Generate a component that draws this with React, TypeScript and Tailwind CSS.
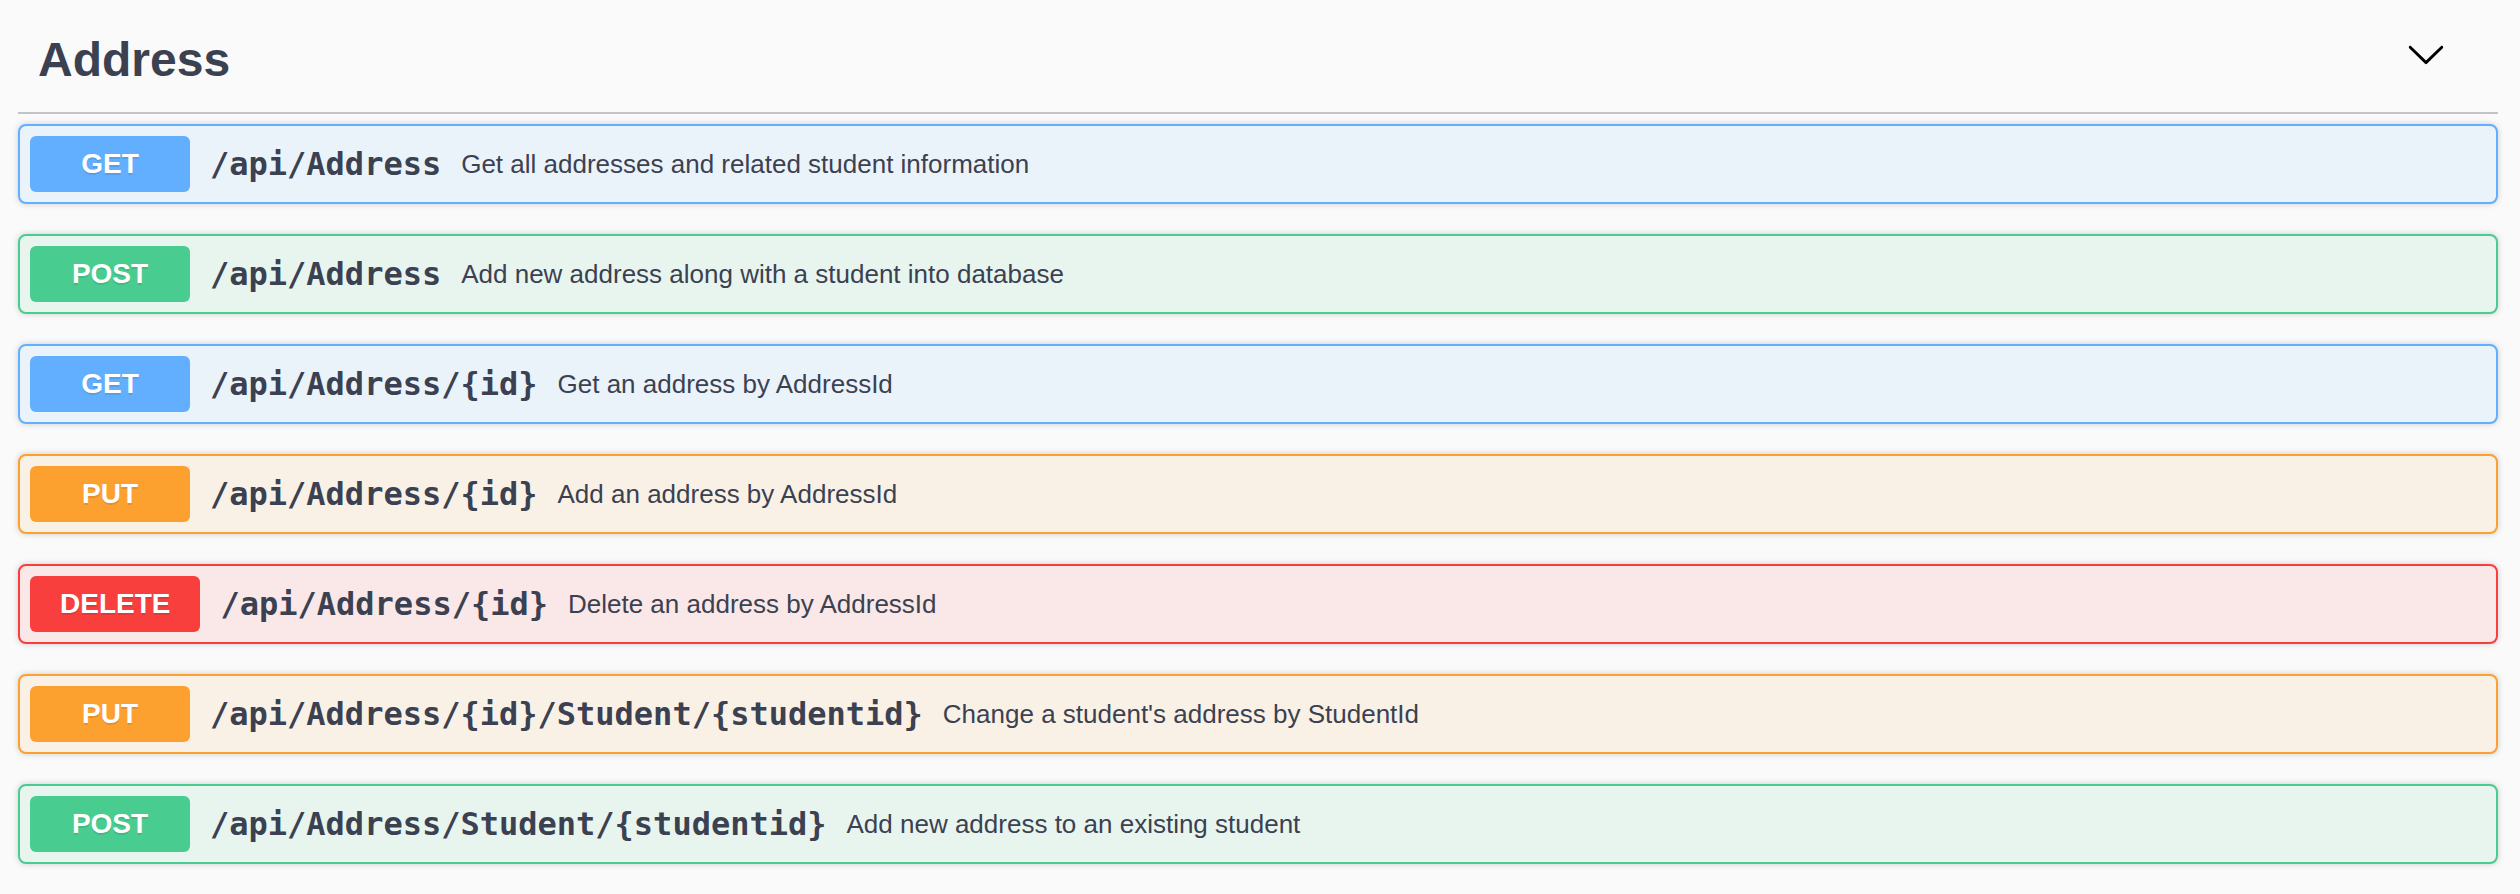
import React from "react";

type Op = { method: "GET" | "POST" | "PUT" | "DELETE"; path: string; desc: string };

const ops: Op[] = [
  { method: "GET", path: "/api/Address", desc: "Get all addresses and related student information" },
  { method: "POST", path: "/api/Address", desc: "Add new address along with a student into database" },
  { method: "GET", path: "/api/Address/{id}", desc: "Get an address by AddressId" },
  { method: "PUT", path: "/api/Address/{id}", desc: "Add an address by AddressId" },
  { method: "DELETE", path: "/api/Address/{id}", desc: "Delete an address by AddressId" },
  { method: "PUT", path: "/api/Address/{id}/Student/{studentid}", desc: "Change a student's address by StudentId" },
  { method: "POST", path: "/api/Address/Student/{studentid}", desc: "Add new address to an existing student" },
];

const styles: Record<Op["method"], { row: string; badge: string }> = {
  GET: { row: "border-[#61affe] bg-[#ebf3fa]", badge: "bg-[#61affe]" },
  POST: { row: "border-[#49cc90] bg-[#e8f5ef]", badge: "bg-[#49cc90]" },
  PUT: { row: "border-[#fca130] bg-[#faf1e6]", badge: "bg-[#fca130]" },
  DELETE: { row: "border-[#f93e3e] bg-[#fae7e7]", badge: "bg-[#f93e3e]" },
};

export default function App() {
  return (
    <div className="h-[894px] w-full overflow-hidden bg-[#fafafa] text-[#3b4151]">
      <div className="ml-[18px] mr-[22px] flex flex-col gap-[30px]">
        <div className="-mb-[20px] flex h-[114px] items-start border-b-2 border-[#c1c3c7]">
          <h3 className="ml-[20px] mt-[32px] font-['Liberation_Sans',Arial,sans-serif] text-[48px] font-bold leading-[55px] text-[#3b4151]">
            Address
          </h3>
          <svg
            className="ml-auto mr-[52px] mt-[34px]"
            width="40"
            height="40"
            viewBox="0 0 20 20"
            aria-hidden="true"
          >
            <path
              fill="#000"
              d="M17.418 6.109c.272-.268.709-.268.979 0s.271.701 0 .969l-7.908 7.83c-.27.268-.707.268-.979 0l-7.908-7.83c-.27-.268-.27-.701 0-.969.271-.268.709-.268.979 0L10 13.25l7.418-7.141z"
            />
          </svg>
        </div>
        {ops.map((op, i) => (
          <div
            key={i}
            className={`flex h-[80px] items-center rounded-[8px] border-2 p-[10px] shadow-[0_0_6px_rgba(0,0,0,0.19)] ${styles[op.method].row}`}
          >
            <span
              className={`min-w-[160px] rounded-[6px] px-[30px] py-[12px] text-center font-['Liberation_Sans',Arial,sans-serif] text-[28px] font-bold leading-[32px] text-white [text-shadow:0_2px_0_rgba(0,0,0,0.1)] ${styles[op.method].badge}`}
            >
              {op.method}
            </span>
            <span className="pl-[20px] font-['DejaVu_Sans_Mono',monospace] text-[32px] font-bold leading-[40px] text-[#3b4151]">
              {op.path}
            </span>
            <span className="pl-[20px] font-['Liberation_Sans',Arial,sans-serif] text-[26px] leading-[32px] text-[#3b4151]">
              {op.desc}
            </span>
          </div>
        ))}
      </div>
    </div>
  );
}
